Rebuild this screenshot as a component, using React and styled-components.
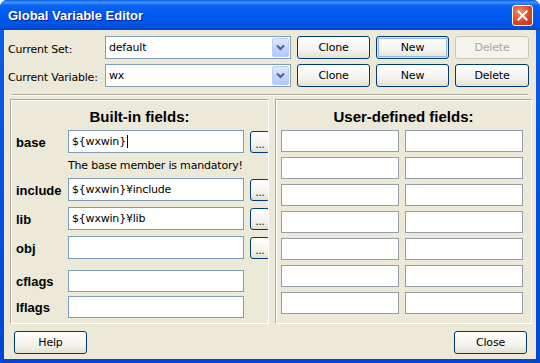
import React from 'react';
import styled, { createGlobalStyle } from 'styled-components';

const UI_FONT = '"DejaVu Sans", "Liberation Sans", sans-serif';
const BOLD_FONT = '"Liberation Sans", Arial, sans-serif';

const GlobalStyle = createGlobalStyle`
  html, body {
    margin: 0;
    padding: 0;
    background: #ffffff;
  }
  * {
    box-sizing: border-box;
  }
`;

const Window = styled.div`
  width: 540px;
  height: 363px;
  display: flex;
  flex-direction: column;
  overflow: hidden;
  border-radius: 7px 7px 0 0;
  background: linear-gradient(#0a5fe8, #0046d5);
  font-family: ${UI_FONT};
  font-size: 11px;
  letter-spacing: -0.2px;
  color: #000;
`;

const TitleBar = styled.div`
  height: 30px;
  flex: none;
  display: flex;
  align-items: center;
  justify-content: space-between;
  padding: 0 7px 0 8px;
  background: linear-gradient(
    #0a5ae6 0%,
    #3d95ff 8%,
    #0a62f2 18%,
    #0058ee 50%,
    #0054e3 85%,
    #0046c8 100%
  );
`;

const Title = styled.span`
  color: #fff;
  font-family: ${BOLD_FONT};
  font-weight: bold;
  font-size: 13px;
  letter-spacing: 0;
  text-shadow: 1px 1px 0 #0a1e8c;
`;

const CloseBox = styled.div`
  width: 21px;
  height: 21px;
  border: 1px solid #fff;
  border-radius: 3px;
  background: radial-gradient(circle at 35% 30%, #f08c6c, #d9461c 60%, #c0340e);
  display: flex;
  align-items: center;
  justify-content: center;
`;

const Body = styled.div`
  flex: 1;
  margin: 0 4px 4px 4px;
  background: #ece9d8;
  display: flex;
  flex-direction: column;
  padding: 6px 6px 0 4px;
`;

const TopGrid = styled.div`
  display: grid;
  grid-template-columns: 91px 186px 73px 73px 74px;
  grid-auto-rows: 23px;
  column-gap: 6px;
  row-gap: 5px;
  align-items: center;
`;

const Label = styled.span`
  white-space: nowrap;
  padding-top: 3px;
`;

const ComboBox = styled.div`
  height: 23px;
  width: 186px;
  background: #fff;
  border: 1px solid #7f9db9;
  display: flex;
  align-items: center;
  justify-content: space-between;
  padding: 0 1px 0 3px;
`;

const ComboArrow = styled.div`
  width: 17px;
  height: 19px;
  border-radius: 2px;
  border: 1px solid #b9cdf6;
  background: linear-gradient(#dfe9fd, #c0d3fa 60%, #b3c9f7);
  display: flex;
  align-items: center;
  justify-content: center;
`;

const Button = styled.button`
  height: 23px;
  padding: 0;
  font-family: ${UI_FONT};
  font-size: 11px;
  letter-spacing: -0.2px;
  color: ${(p) => (p.disabled ? '#aca899' : '#000')};
  border: 1px solid ${(p) => (p.disabled ? '#c9c7ba' : '#003c74')};
  border-radius: 3px;
  background: ${(p) =>
    p.disabled ? '#f5f4ea' : 'linear-gradient(#ffffff, #f4f3ee 60%, #e3e1d6)'};
  box-shadow: ${(p) =>
    p.focused ? 'inset 0 0 0 1px #cee7ff, inset 0 0 0 2px #98b8ea' : 'none'};
  width: ${(p) => p.w || 73}px;
`;

const Separator = styled.div`
  margin: 7px 2px 3px 4px;
  border-top: 1px solid #aca899;
  border-bottom: 1px solid #fff;
`;

const Panels = styled.div`
  display: flex;
  gap: 6px;
  padding-left: 2px;
  height: 225px;
`;

const Panel = styled.div`
  width: ${(p) => p.w}px;
  flex: none;
  border-top: 1px solid #aca899;
  border-left: 1px solid #aca899;
  border-right: 1px solid #fff;
  border-bottom: 1px solid #fff;
  box-shadow: inset 1px 1px 0 #fff;
  overflow: hidden;
  padding: 0 0 0 5px;
`;

const PanelTitle = styled.div`
  height: 30px;
  display: flex;
  align-items: center;
  justify-content: center;
  padding-top: 2px;
  font-family: ${BOLD_FONT};
  font-weight: bold;
  font-size: 15px;
  letter-spacing: 0;
  margin-left: -5px;
`;

const FieldRow = styled.div`
  display: flex;
  align-items: center;
  height: ${(p) => p.h || 23}px;
  margin-bottom: ${(p) => p.mb ?? 6}px;
`;

const FieldLabel = styled.span`
  width: 52px;
  flex: none;
  font-family: ${BOLD_FONT};
  font-weight: bold;
  font-size: 13px;
  letter-spacing: 0;
  padding-top: 1px;
`;

const TextBox = styled.div`
  width: ${(p) => p.w}px;
  flex: none;
  height: ${(p) => p.h || 23}px;
  background: #fff;
  border: 1px solid ${(p) => p.border || '#7f9db9'};
  display: flex;
  align-items: center;
  padding: 0 3px;
  white-space: nowrap;
`;

const Caret = styled.span`
  display: inline-block;
  width: 1px;
  height: 13px;
  background: #000;
  margin-left: 1px;
`;

const BrowseButton = styled(Button)`
  width: 20px;
  flex: none;
  margin-left: 6px;
  font-size: 10px;
  padding-top: 6px;
  height: 22px;
`;

const Note = styled.div`
  height: 25px;
  padding-left: 52px;
  display: flex;
  align-items: center;
`;

const UserGrid = styled.div`
  display: grid;
  grid-template-columns: 118px 118px;
  grid-auto-rows: 22px;
  column-gap: 6px;
  row-gap: 5px;
`;

const Footer = styled.div`
  display: flex;
  justify-content: space-between;
  padding: 7px 3px 0 6px;
`;

function Chevron() {
  return (
    <svg width="9" height="7" viewBox="0 0 9 7">
      <path d="M1 1.5 L4.5 5 L8 1.5" fill="none" stroke="#4d6185" strokeWidth="2" />
    </svg>
  );
}

function CloseX() {
  return (
    <svg width="11" height="11" viewBox="0 0 11 11">
      <path d="M1.5 1.5 L9.5 9.5 M9.5 1.5 L1.5 9.5" stroke="#fff" strokeWidth="2" strokeLinecap="square" />
    </svg>
  );
}

const builtIn = [
  { name: 'include', value: '${wxwin}¥include', browse: true },
  { name: 'lib', value: '${wxwin}¥lib', browse: true },
  { name: 'obj', value: '', browse: true, mb: 11 },
  { name: 'cflags', value: '', h: 22, mb: 4 },
  { name: 'lflags', value: '', h: 22 },
];

export default function App() {
  return (
    <>
      <GlobalStyle />
      <Window>
        <TitleBar>
          <Title>Global Variable Editor</Title>
          <CloseBox>
            <CloseX />
          </CloseBox>
        </TitleBar>
        <Body>
          <TopGrid>
            <Label>Current Set:</Label>
            <ComboBox>
              <span>default</span>
              <ComboArrow>
                <Chevron />
              </ComboArrow>
            </ComboBox>
            <Button>Clone</Button>
            <Button focused>New</Button>
            <Button w={74} disabled>
              Delete
            </Button>
            <Label>Current Variable:</Label>
            <ComboBox>
              <span>wx</span>
              <ComboArrow>
                <Chevron />
              </ComboArrow>
            </ComboBox>
            <Button>Clone</Button>
            <Button>New</Button>
            <Button w={74}>Delete</Button>
          </TopGrid>
          <Separator />
          <Panels>
            <Panel w={259}>
              <PanelTitle>Built-in fields:</PanelTitle>
              <FieldRow mb={0}>
                <FieldLabel>base</FieldLabel>
                <TextBox w={176}>
                  {'${wxwin}'}
                  <Caret />
                </TextBox>
                <BrowseButton>...</BrowseButton>
              </FieldRow>
              <Note>The base member is mandatory!</Note>
              {builtIn.map((f) => (
                <FieldRow key={f.name} h={f.h} mb={f.mb}>
                  <FieldLabel>{f.name}</FieldLabel>
                  <TextBox w={176} h={f.h}>
                    {f.value}
                  </TextBox>
                  {f.browse && <BrowseButton>...</BrowseButton>}
                </FieldRow>
              ))}
            </Panel>
            <Panel w={257}>
              <PanelTitle>User-defined fields:</PanelTitle>
              <UserGrid>
                {Array.from({ length: 14 }, (_, i) => (
                  <TextBox key={i} w={118} h={22} border="#939ea9" />
                ))}
              </UserGrid>
            </Panel>
          </Panels>
          <Footer>
            <Button>Help</Button>
            <Button>Close</Button>
          </Footer>
        </Body>
      </Window>
    </>
  );
}
